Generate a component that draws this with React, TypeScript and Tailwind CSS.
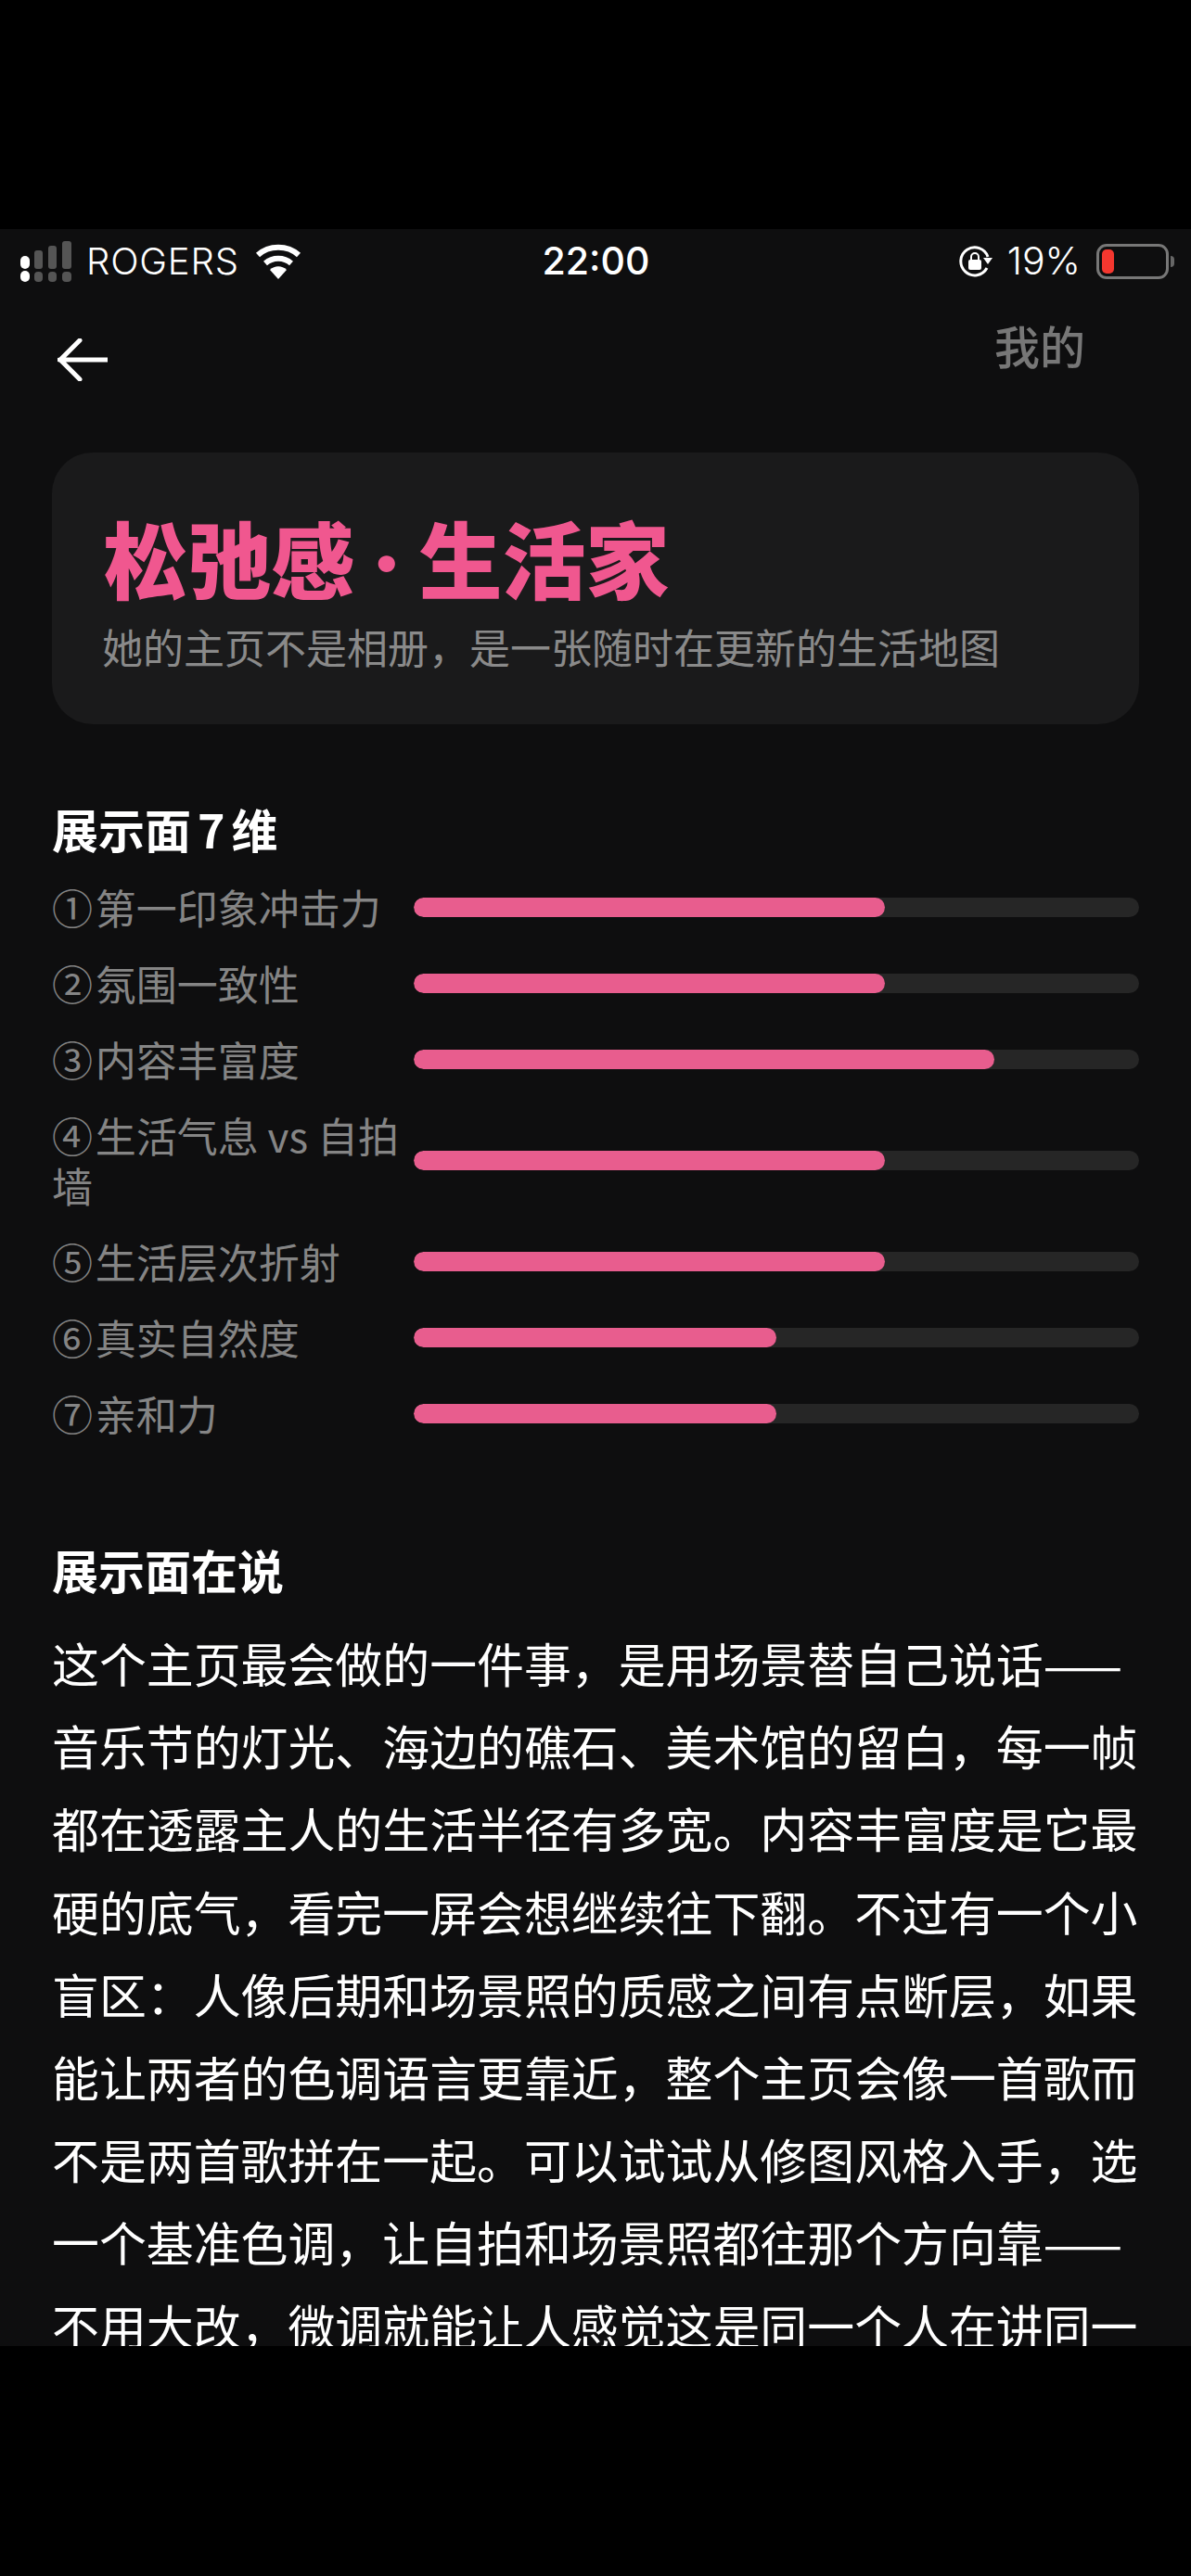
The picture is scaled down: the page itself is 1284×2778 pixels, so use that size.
const CJK = "font-['Noto_Sans_CJK_SC',sans-serif]";

// hair space between the circled number and the label
const DIMENSIONS = [
  { label: "①\u200A第一印象冲击力", fill: "w-[65%]" },
  { label: "②\u200A氛围一致性", fill: "w-[65%]" },
  { label: "③\u200A内容丰富度", fill: "w-[80%]" },
  { label: "④\u200A生活气息 vs 自拍墙", fill: "w-[65%]" },
  { label: "⑤\u200A生活层次折射", fill: "w-[65%]" },
  { label: "⑥\u200A真实自然度", fill: "w-1/2" },
  { label: "⑦\u200A亲和力", fill: "w-1/2" },
];

// full-width punctuation written as escapes so it stays full-width
const COMMA = "\uFF0C";
const COLON = "\uFF1A";

const BODY = `这个主页最会做的一件事${COMMA}是用场景替自己说话——音乐节的灯光、海边的礁石、美术馆的留白${COMMA}每一帧都在透露主人的生活半径有多宽。内容丰富度是它最硬的底气${COMMA}看完一屏会想继续往下翻。不过有一个小盲区${COLON}人像后期和场景照的质感之间有点断层${COMMA}如果能让两者的色调语言更靠近${COMMA}整个主页会像一首歌而不是两首歌拼在一起。可以试试从修图风格入手${COMMA}选一个基准色调${COMMA}让自拍和场景照都往那个方向靠——不用大改${COMMA}微调就能让人感觉这是同一个人在讲同一个故事。`;

const Signal = () => (
  <svg width="60" height="44" viewBox="0 0 60 44" className="shrink-0">
    <rect x="0" y="16" width="10" height="14" rx="5" fill="#fff" />
    <rect x="0" y="32" width="10" height="12" rx="5" fill="#fff" />
    <rect x="15" y="10" width="9" height="20" rx="3" fill="#555" />
    <rect x="15" y="33" width="9" height="11" rx="4" fill="#555" />
    <rect x="30" y="5" width="9" height="25" rx="3" fill="#555" />
    <rect x="30" y="33" width="9" height="11" rx="4" fill="#555" />
    <rect x="45" y="0" width="10" height="30" rx="3" fill="#555" />
    <rect x="45" y="33" width="10" height="11" rx="4" fill="#555" />
  </svg>
);

const Wifi = () => (
  <svg width="50" height="38" viewBox="0 0 50 38" className="shrink-0">
    <path d="M3 12 C15 1 35 1 47 12" fill="none" stroke="#fff" strokeWidth="6" />
    <path d="M11 21 C19 14 31 14 39 21" fill="none" stroke="#fff" strokeWidth="6" />
    <path d="M16 28 C21 23 29 23 34 28 L25 38 Z" fill="#fff" />
  </svg>
);

const RotationLock = () => (
  <svg width="36" height="36" viewBox="0 0 36 36" className="shrink-0">
    <path d="M30 25 A15 15 0 1 1 31 13" fill="none" stroke="#fff" strokeWidth="3" />
    <path d="M26 14 L36 14 L31 21 Z" fill="#fff" />
    <rect x="10" y="16" width="14" height="11" rx="2" fill="#fff" />
    <path d="M13 16 V13 a4 4 0 0 1 8 0 V16" fill="none" stroke="#fff" strokeWidth="2" />
  </svg>
);

const StatusBar = () => (
  <div className="h-[70px] flex items-center justify-between pl-[22px] pr-[18px] text-white font-['Inter',sans-serif]">
    <div className="w-[400px] flex items-center gap-[11px]">
      <Signal />
      <span className="text-[40px] font-light tracking-[0.8px]">ROGERS</span>
      <span className="ml-[6px] flex"><Wifi /></span>
    </div>
    <span className="text-[41px] font-medium -ml-[3px]">22:00</span>
    <div className="w-[400px] flex items-center justify-end">
      <RotationLock />
      <span className="text-[41px] font-light ml-[16px] mr-[17px]">19%</span>
      <div className="w-[78px] h-[38px] rounded-[11px] border-[3px] border-[#777] p-[3px]">
        <div className="w-[13px] h-full rounded-[5px] bg-[#f4372f]" />
      </div>
      <div className="ml-[2px] w-[4px] h-[12px] rounded-r-full bg-[#666]" />
    </div>
  </div>
);

const NavBar = () => (
  <div className="h-[171px] flex items-start justify-between pl-[62px] pr-[114px]">
    <svg width="54" height="46" viewBox="0 0 54 46" className="mt-[48px]">
      <path d="M2 23 H54 M24 2 L3 23 L24 44" fill="none" stroke="#fff" strokeWidth="5" strokeLinecap="round" strokeLinejoin="round" />
    </svg>
    <span className={`${CJK} mt-[19px] text-[49px] leading-[72px] font-medium text-[#777]`}>我的</span>
  </div>
);

const Bar = ({ fill }: { fill: string }) => (
  <div className="flex-1 h-[21px] rounded-full bg-[#262626] overflow-hidden">
    <div className={`h-full rounded-full bg-[#e85d8e] ${fill}`} />
  </div>
);

export default function App() {
  return (
    <div className={`h-[2778px] bg-black pt-[247px] ${CJK}`}>
      <div className="h-[2283px] bg-[#0e0e0f] overflow-hidden">
        <StatusBar />
        <NavBar />
        <div className="mx-[56px]">
          <div className="h-[293px] rounded-[44px] bg-[#1a1a1b] pl-[56px] pt-[56px]">
            <h1 className="text-[90px] leading-[112px] font-black text-[#f0578f] whitespace-nowrap">
              松弛感<span className="font-['Inter',sans-serif]"> · </span>生活家
            </h1>
            <p className="text-[44px] leading-[60px] mt-[4px] -ml-[2px] text-[#8a8a8a]">她的主页不是相册{COMMA}是一张随时在更新的生活地图</p>
          </div>

          <h2 className="mt-[82px] text-[50px] leading-[60px] font-bold text-white">
            展示面<span className="mx-[7px]">7</span>维
          </h2>
          <div className="mt-[28px] flex flex-col gap-[28px]">
            {DIMENSIONS.map((d) => (
              <div key={d.label} className="flex items-center gap-[14px]">
                <span className="w-[376px] shrink-0 text-[44px] leading-[54px] text-[#858585]">{d.label}</span>
                <Bar fill={d.fill} />
              </div>
            ))}
          </div>

          <h2 className="mt-[111px] text-[50px] leading-[60px] font-bold text-white">展示面在说</h2>
          <p className="mt-[27px] text-[50.9px] leading-[89.2px] text-white">{BODY}</p>
        </div>
      </div>
    </div>
  );
}
